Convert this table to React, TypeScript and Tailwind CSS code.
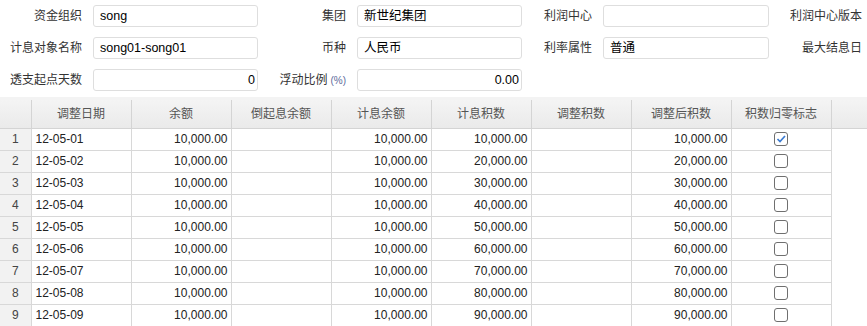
import React from "react";

const font = { fontFamily: '"Liberation Sans", "Noto Sans CJK SC", sans-serif' };

function Label({ children }: { children: React.ReactNode }) {
  return (
    <div className="flex h-[22px] items-center justify-end pr-[11px] text-[12px] text-[#333] whitespace-nowrap">
      {children}
    </div>
  );
}

function Field({ value, right }: { value?: string; right?: boolean }) {
  return (
    <div
      className={`flex h-[22px] items-center rounded-[3px] border border-[#dedede] bg-white text-[12.5px] text-black ${
        right ? "justify-end pr-[2px]" : "pl-[6px]"
      }`}
    >
      {value}
    </div>
  );
}

const rows = [1, 2, 3, 4, 5, 6, 7, 8, 9].map((i) => ({
  n: i,
  date: `12-05-0${i}`,
  bal: "10,000.00",
  calc: "10,000.00",
  acc: `${i}0,000.00`,
  adj: `${i}0,000.00`,
  checked: i === 1,
}));

const headers = ["调整日期", "余额", "倒起息余额", "计息余额", "计息积数", "调整积数", "调整后积数", "积数归零标志"];

function Checkbox({ checked }: { checked: boolean }) {
  return (
    <div className="mx-auto flex h-[14px] w-[14px] items-center justify-center rounded-[3px] border border-[#6f6f6f] bg-white">
      {checked && (
        <svg width="12" height="12" viewBox="0 0 12 12">
          <path d="M2.5 6 L5 8.5 L10 3" fill="none" stroke="#3b7bd1" strokeWidth="1.7" />
        </svg>
      )}
    </div>
  );
}

export default function App() {
  return (
    <div className="w-[867px] h-[326px] overflow-hidden bg-white" style={font}>
      <div className="grid h-[97px] grid-cols-[93px_165px_99px_165px_81px_166px_1fr] content-start gap-y-[10px] pt-[5px]">
        <Label>资金组织</Label>
        <Field value="song" />
        <Label>集团</Label>
        <Field value="新世纪集团" />
        <Label>利润中心</Label>
        <Field />
        <div className="flex h-[22px] items-center justify-end pr-[5px] text-[12px] text-[#333]">利润中心版本</div>

        <Label>计息对象名称</Label>
        <Field value="song01-song01" />
        <Label>币种</Label>
        <Field value="人民币" />
        <Label>利率属性</Label>
        <Field value="普通" />
        <div className="flex h-[22px] items-center justify-end pr-[5px] text-[12px] text-[#333]">最大结息日</div>

        <Label>透支起点天数</Label>
        <Field value="0" right />
        <Label>
          浮动比例<span className="ml-[3px] text-[10px] text-[#5b6b9b]">(%)</span>
        </Label>
        <Field value="0.00" right />
        <div />
        <div />
        <div />
      </div>

      <div className="h-[3px] bg-[#f3f3f3]" />
      <table className="w-[867px] table-fixed border-collapse text-[12px]">
        <colgroup>
          <col className="w-[31px]" />
          {headers.map((h) => (
            <col key={h} className="w-[100px]" />
          ))}
          <col />
        </colgroup>
        <thead>
          <tr className="h-[28px] bg-gradient-to-b from-[#f4f4f4] to-[#eaeaea]">
            <th className="border-r border-b border-[#d4d4d4] p-0" />
            {headers.map((h) => (
              <th key={h} className="border-r border-b border-[#d4d4d4] p-0 text-center font-normal text-[#555]">
                {h}
              </th>
            ))}
            <th className="border-b border-[#d4d4d4] p-0" />
          </tr>
        </thead>
        <tbody>
          {rows.map((r) => (
            <tr key={r.n} className="h-[22px]">
              <td className="border-r border-b border-[#d8d8d8] bg-[#f2f2f2] p-0 text-center text-[#444]">{r.n}</td>
              <td className="border-r border-b border-[#d8d8d8] px-[4px] py-0 text-left text-[#222]">{r.date}</td>
              <td className="border-r border-b border-[#d8d8d8] px-[3px] py-0 text-right text-[#222]">{r.bal}</td>
              <td className="border-r border-b border-[#d8d8d8] p-0" />
              <td className="border-r border-b border-[#d8d8d8] px-[3px] py-0 text-right text-[#222]">{r.calc}</td>
              <td className="border-r border-b border-[#d8d8d8] px-[3px] py-0 text-right text-[#222]">{r.acc}</td>
              <td className="border-r border-b border-[#d8d8d8] p-0" />
              <td className="border-r border-b border-[#d8d8d8] px-[3px] py-0 text-right text-[#222]">{r.adj}</td>
              <td className="border-r border-b border-[#d8d8d8] p-0">
                <Checkbox checked={r.checked} />
              </td>
              <td className="p-0" />
            </tr>
          ))}
        </tbody>
      </table>
    </div>
  );
}
